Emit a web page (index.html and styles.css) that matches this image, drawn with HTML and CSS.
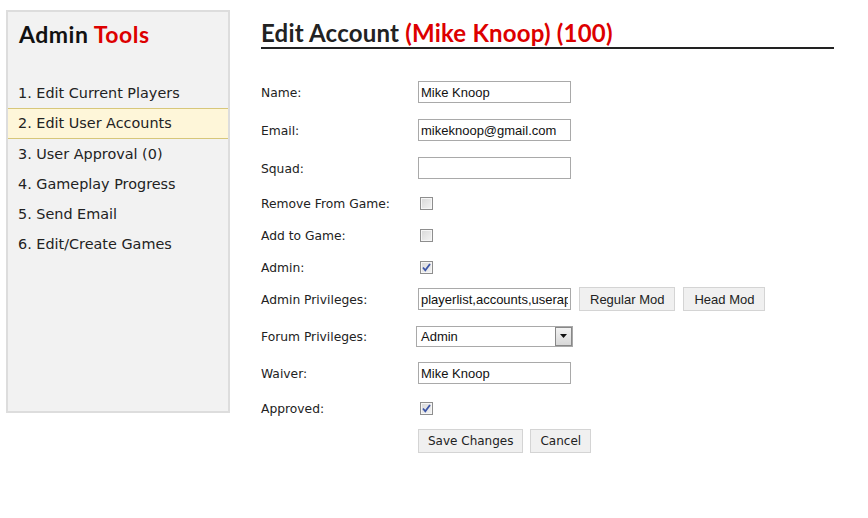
FILE: index.html
```html
<!DOCTYPE html>
<html lang="en">
<head>
    <meta charset="UTF-8">
    <title>Admin Tools - Edit Account</title>
    <link rel="stylesheet" href="styles.css">
</head>
<body>
    <div class="page">
        <div class="sidebar">
            <h2 class="side-title">Admin <span class="red">Tools</span></h2>
            <ul class="nav">
                <li>1. Edit Current Players</li>
                <li class="active">2. Edit User Accounts</li>
                <li>3. User Approval (0)</li>
                <li>4. Gameplay Progress</li>
                <li>5. Send Email</li>
                <li>6. Edit/Create Games</li>
            </ul>
        </div>

        <div class="main">
            <h1 class="heading">Edit Account <span class="red">(Mike Knoop) (100)</span></h1>

            <div class="form">
                <div class="row tall">
                    <label>Name:</label>
                    <input class="text" type="text" value="Mike Knoop">
                </div>
                <div class="row tall">
                    <label>Email:</label>
                    <input class="text" type="text" value="mikeknoop@gmail.com">
                </div>
                <div class="row tall">
                    <label>Squad:</label>
                    <input class="text" type="text" value="">
                </div>
                <div class="row">
                    <label>Remove From Game:</label>
                    <span class="check"></span>
                </div>
                <div class="row">
                    <label>Add to Game:</label>
                    <span class="check"></span>
                </div>
                <div class="row">
                    <label>Admin:</label>
                    <span class="check">
                        <svg width="11" height="11" viewBox="0 0 11 11"><path d="M2 5.5 L4.3 8.3 L9 2" fill="none" stroke="#3d56a8" stroke-width="1.8"/></svg>
                    </span>
                </div>
                <div class="row">
                    <label>Admin Privileges:</label>
                    <input class="text" type="text" value="playerlist,accounts,userapproval">
                    <button class="btn arial">Regular Mod</button>
                    <button class="btn arial">Head Mod</button>
                </div>
                <div class="row wide">
                    <label>Forum Privileges:</label>
                    <div class="select">
                        <span class="select-value">Admin</span>
                        <span class="select-arrow">
                            <svg width="7" height="4" viewBox="0 0 7 4"><path d="M0 0 H7 L3.5 4 Z" fill="#111"/></svg>
                        </span>
                    </div>
                </div>
                <div class="row">
                    <label>Waiver:</label>
                    <input class="text" type="text" value="Mike Knoop">
                </div>
                <div class="row tall">
                    <label>Approved:</label>
                    <span class="check">
                        <svg width="11" height="11" viewBox="0 0 11 11"><path d="M2 5.5 L4.3 8.3 L9 2" fill="none" stroke="#3d56a8" stroke-width="1.8"/></svg>
                    </span>
                </div>
                <div class="row short">
                    <label></label>
                    <button class="btn">Save Changes</button>
                    <button class="btn">Cancel</button>
                </div>
            </div>
        </div>
    </div>
</body>
</html>
```

FILE: styles.css
```css
body {
    margin: 0;
    padding: 0;
    background-color: #fff;
    color: #222;
    font-family: "DejaVu Sans", Verdana, sans-serif;
}

.page {
    display: flex;
    align-items: flex-start;
    padding: 10px 0 0 6px;
}

.red {
    color: #dd0000;
}

.sidebar {
    width: 220px;
    height: 399px;
    background-color: #f2f2f2;
    border: 2px solid #dddddd;
}

.side-title {
    margin: 0;
    padding: 8px 0 0 11px;
    height: 58px;
    font-family: Lato, "DejaVu Sans", sans-serif;
    font-weight: bold;
    font-size: 23px;
    letter-spacing: 0.5px;
    color: #111;
}

.nav {
    list-style: none;
    margin: 0;
    padding: 0;
}

.nav li {
    height: 30px;
    line-height: 30px;
    padding-left: 10px;
    font-size: 14.4px;
    color: #222;
}

.nav li.active {
    background-color: #fef6d9;
    border-top: 1px solid #d7c77a;
    border-bottom: 1px solid #d7c77a;
    height: 29px;
    line-height: 29px;
}

.main {
    width: 573px;
    margin-left: 31px;
}

.heading {
    margin: 0;
    padding-top: 9px;
    height: 28px;
    font-family: Lato, "DejaVu Sans", sans-serif;
    font-weight: bold;
    font-size: 24px;
    letter-spacing: 0.2px;
    line-height: 28px;
    color: #222;
    border-bottom: 2px solid #222;
}

.form {
    padding-top: 24px;
}

.row {
    display: flex;
    align-items: center;
    height: 32px;
}

.row.tall {
    height: 38px;
}

.row.wide {
    height: 42px;
}

.row.short {
    height: 28px;
}

.row label {
    width: 157px;
    flex-shrink: 0;
    padding-top: 1px;
    font-size: 12.3px;
    color: #222;
}

.text {
    box-sizing: border-box;
    width: 153px;
    height: 22px;
    margin: 0;
    padding: 0 2px;
    border: 1px solid #a9a9a9;
    font-family: "Liberation Sans", Arial, sans-serif;
    font-size: 13px;
    color: #111;
    outline: none;
}

.check {
    display: flex;
    align-items: center;
    justify-content: center;
    box-sizing: border-box;
    width: 13px;
    height: 13px;
    margin-left: 2px;
    border: 1px solid #8e8e8e;
    background: linear-gradient(135deg, #d8d8d8, #f4f4f4);
    box-shadow: inset 0 0 0 1px #f6f6f6;
}

.btn {
    box-sizing: border-box;
    height: 24px;
    margin: 0 0 0 7px;
    padding: 0 9px;
    background-color: #f0f0f0;
    border: 1px solid #d4d4d4;
    font-family: "DejaVu Sans", Verdana, sans-serif;
    font-size: 12px;
    color: #222;
}

.row.short .btn:first-of-type {
    margin-left: 0;
}

.btn.arial {
    margin-left: 8px;
    padding: 0 10px;
    font-family: "Liberation Sans", Arial, sans-serif;
    font-size: 13px;
}

.select {
    display: flex;
    box-sizing: border-box;
    width: 157px;
    height: 21px;
    margin-left: -2px;
    border: 1px solid #a9a9a9;
    background-color: #fff;
}

.select-value {
    flex: 1;
    padding-left: 4px;
    line-height: 19px;
    font-family: "Liberation Sans", Arial, sans-serif;
    font-size: 13px;
    color: #111;
}

.select-arrow {
    display: flex;
    align-items: center;
    justify-content: center;
    width: 15px;
    border: 1px solid #888;
    background: linear-gradient(#f2f2f2, #d8d8d8);
}
```
